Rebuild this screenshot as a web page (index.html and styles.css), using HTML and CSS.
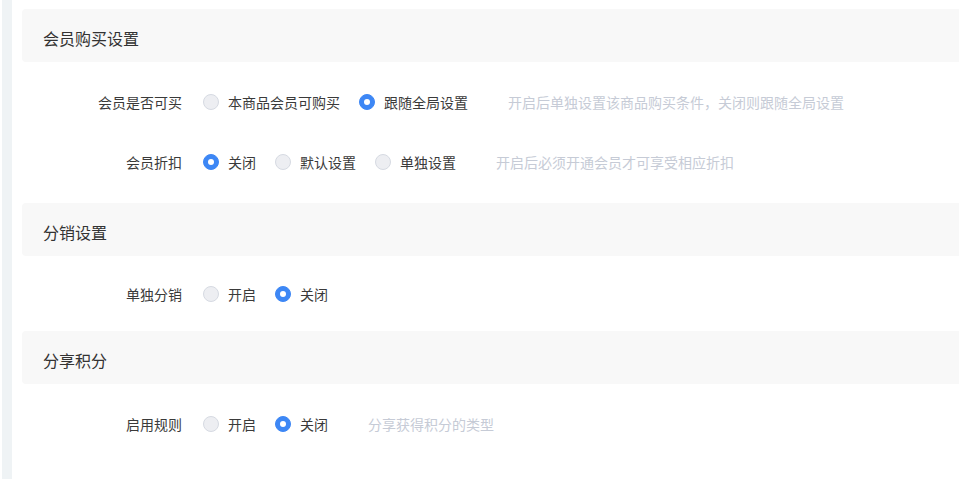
FILE: index.html
```html
<!DOCTYPE html>
<html lang="zh-CN">
<head>
  <meta charset="UTF-8">
  <title>商品设置</title>
  <link rel="stylesheet" href="styles.css">
</head>
<body>
<div class="page">
  <div class="side-strip"></div>
  <div class="content">

    <!-- 会员购买设置 -->
    <div class="section">
      <div class="section-title">会员购买设置</div>
      <div class="section-body">
        <div class="form-row">
          <div class="form-label">会员是否可买</div>
          <label class="radio"><span class="radio-dot"></span>本商品会员可购买</label>
          <label class="radio"><span class="radio-dot checked"></span>跟随全局设置</label>
          <span class="hint">开启后单独设置该商品购买条件，关闭则跟随全局设置</span>
        </div>
        <div class="form-row">
          <div class="form-label">会员折扣</div>
          <label class="radio"><span class="radio-dot checked"></span>关闭</label>
          <label class="radio"><span class="radio-dot"></span>默认设置</label>
          <label class="radio"><span class="radio-dot"></span>单独设置</label>
          <span class="hint">开启后必须开通会员才可享受相应折扣</span>
        </div>
      </div>
    </div>

    <!-- 分销设置 -->
    <div class="section">
      <div class="section-title">分销设置</div>
      <div class="section-body compact">
        <div class="form-row">
          <div class="form-label">单独分销</div>
          <label class="radio"><span class="radio-dot"></span>开启</label>
          <label class="radio"><span class="radio-dot checked"></span>关闭</label>
        </div>
      </div>
    </div>

    <!-- 分享积分 -->
    <div class="section">
      <div class="section-title">分享积分</div>
      <div class="section-body">
        <div class="form-row">
          <div class="form-label">启用规则</div>
          <label class="radio"><span class="radio-dot"></span>开启</label>
          <label class="radio"><span class="radio-dot checked"></span>关闭</label>
          <span class="hint">分享获得积分的类型</span>
        </div>
      </div>
    </div>

  </div>
</div>
</body>
</html>
```

FILE: styles.css
```css
body {
  margin: 0;
  background: #ffffff;
  font-family: "Noto Sans CJK SC", "Noto Sans", sans-serif;
  color: #333333;
  font-size: 14px;
}
.page {
  display: flex;
  min-height: 479px;
  overflow: hidden;
}
.side-strip {
  width: 10px;
  margin-left: 2px;
  background-color: #eff3f5;
  flex-shrink: 0;
}
.content {
  flex: 1;
  padding-left: 10px;
  padding-top: 9px;
  margin-right: -10px;
}
.section-title {
  height: 53px;
  line-height: 58px;
  background-color: #f8f8f8;
  border-radius: 4px;
  padding-left: 21px;
  font-size: 16px;
  color: #333333;
}
.section-body {
  padding: 10px 0 11px;
}
.section-body.compact {
  padding: 8px 0 7px;
}
.form-row {
  display: flex;
  align-items: center;
  height: 60px;
}
.form-label {
  width: 181px;
  text-align: right;
  padding-right: 21px;
  box-sizing: border-box;
  color: #3a3a3a;
}
.radio {
  display: flex;
  align-items: center;
  margin-right: 19px;
  color: #3a3a3a;
  cursor: pointer;
}
.radio-dot {
  width: 14px;
  height: 14px;
  border-radius: 50%;
  border: 1px solid #d6dae2;
  background-color: #edeef2;
  margin-right: 9px;
  position: relative;
}
.radio-dot.checked {
  border-color: #3d87f5;
  background-color: #3d87f5;
}
.radio-dot.checked::after {
  content: "";
  position: absolute;
  width: 6px;
  height: 6px;
  border-radius: 50%;
  background: #ffffff;
  left: 4px;
  top: 4px;
}
.hint {
  margin-left: 21px;
  color: #c6cbd6;
}
```
